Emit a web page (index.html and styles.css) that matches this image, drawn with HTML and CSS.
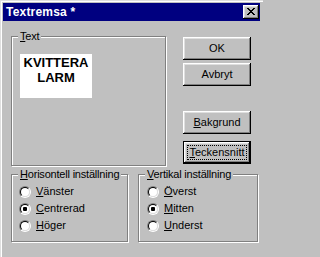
FILE: index.html
```html
<!DOCTYPE html>
<html lang="sv">
<head>
<meta charset="utf-8">
<title>Textremsa</title>
<link rel="stylesheet" href="styles.css">
</head>
<body>
<div class="window">
  <div class="titlebar">
    <span class="title">Textremsa *</span>
    <span class="close">
      <svg width="8" height="7" viewBox="0 0 8 7" shape-rendering="crispEdges">
        <path d="M0 0h2v1H0zM6 0h2v1H6zM1 1h2v1H1zM5 1h2v1H5zM2 2h4v1H2zM3 3h2v1H3zM2 4h4v1H2zM1 5h2v1H1zM5 5h2v1H5zM0 6h2v1H0zM6 6h2v1H6z" fill="#000"/>
      </svg>
    </span>
  </div>
  <div class="content">
    <div class="top">
      <div class="group text-group">
        <div class="legend"><u>T</u>ext</div>
        <div class="preview">KVITTERA<br>LARM</div>
      </div>
      <div class="buttons">
        <div class="btn">OK</div>
        <div class="btn btn-cancel">Avbryt</div>
        <div class="btn btn-bg"><span><u>B</u>akgrund</span></div>
        <div class="btn btn-default"><span class="focus"><u>T</u>eckensnitt</span></div>
      </div>
    </div>
    <div class="bottom">
      <div class="group h-group">
        <div class="legend"><u>H</u>orisontell inställning</div>
        <div class="options">
          <div class="option"><span class="radio"><i></i></span><span><u>V</u>änster</span></div>
          <div class="option"><span class="radio"><i><b></b></i></span><span><u>C</u>entrerad</span></div>
          <div class="option"><span class="radio"><i></i></span><span><u>H</u>öger</span></div>
        </div>
      </div>
      <div class="group v-group">
        <div class="legend"><u>V</u>ertikal inställning</div>
        <div class="options">
          <div class="option"><span class="radio"><i></i></span><span><u>Ö</u>verst</span></div>
          <div class="option"><span class="radio"><i><b></b></i></span><span><u>M</u>itten</span></div>
          <div class="option"><span class="radio"><i></i></span><span><u>U</u>nderst</span></div>
        </div>
      </div>
    </div>
  </div>
</div>
</body>
</html>
```
FILE: styles.css
```css
html, body {
  margin: 0;
  padding: 0;
  background: #c0c0c0;
}

body {
  font-family: "Liberation Sans", Arial, sans-serif;
  font-size: 11px;
  line-height: 13px;
  color: #000;
}

u {
  text-decoration: underline;
  text-underline-offset: 1px;
}

.window {
  width: 263px;
  height: 257px;
  box-sizing: border-box;
  padding: 3px;
  background: #c0c0c0;
  box-shadow: inset 1px 1px 0 #dfdfdf, inset 2px 2px 0 #fff;
}

.titlebar {
  height: 18px;
  background: #000080;
  display: flex;
  align-items: center;
  justify-content: space-between;
}

.title {
  color: #fff;
  font-weight: bold;
  font-size: 12px;
  line-height: 18px;
  padding-left: 3px;
  letter-spacing: 0.2px;
}

.close {
  width: 16px;
  height: 14px;
  margin-right: 1px;
  box-sizing: border-box;
  background: #c0c0c0;
  box-shadow: inset -1px -1px 0 #000, inset 1px 1px 0 #fff, inset -2px -2px 0 #808080, inset 2px 2px 0 #dfdfdf;
  display: flex;
  align-items: center;
  justify-content: center;
  padding: 0 1px 1px 0;
}

.close svg {
  display: block;
}

.content {
  padding-left: 8px;
}

.top {
  display: flex;
  align-items: flex-start;
  margin-top: 15px;
}

.group {
  box-sizing: border-box;
  border: 1px solid #808080;
  box-shadow: inset 1px 1px 0 #fff, 1px 1px 0 #fff;
}

.legend {
  display: table;
  margin: -7px 0 0 6px;
  padding: 0 2px;
  background: #c0c0c0;
  line-height: 13px;
  white-space: nowrap;
  letter-spacing: -0.2px;
}

.text-group {
  width: 155px;
  height: 130px;
}

.preview {
  width: 72px;
  height: 44px;
  margin: 11px 0 0 8px;
  box-sizing: border-box;
  padding-top: 1px;
  background: #fff;
  font-weight: bold;
  font-size: 13px;
  line-height: 15px;
  text-align: center;
}

.buttons {
  width: 68px;
  margin: 1px 0 0 17px;
  display: flex;
  flex-direction: column;
}

.btn {
  height: 23px;
  box-sizing: border-box;
  background: #c0c0c0;
  box-shadow: inset -1px -1px 0 #000, inset 1px 1px 0 #fff, inset -2px -2px 0 #808080, inset 2px 2px 0 #dfdfdf;
  display: flex;
  align-items: center;
  justify-content: center;
  font-size: 11px;
}

.btn-cancel {
  margin-top: 3px;
}

.btn-bg {
  margin-top: 25px;
}

.btn-default {
  margin-top: 7px;
  box-shadow: inset 0 0 0 1px #000, inset -2px -2px 0 #000, inset 2px 2px 0 #fff, inset -3px -3px 0 #808080, inset 3px 3px 0 #dfdfdf;
}

.focus {
  outline: 1px dotted #000;
  outline-offset: 0;
  padding: 0 1px;
  line-height: 13px;
}

.bottom {
  display: flex;
  margin-top: 8px;
}

.h-group {
  width: 117px;
  height: 68px;
}

.v-group {
  width: 120px;
  height: 68px;
  margin-left: 10px;
}

.options {
  margin-top: 2px;
  padding-left: 7px;
}

.v-group .options {
  padding-left: 8px;
}

.option {
  height: 17px;
  display: flex;
  align-items: center;
  gap: 5px;
  font-size: 11px;
}

.radio {
  width: 12px;
  height: 12px;
  box-sizing: border-box;
  border-radius: 50%;
  border: 1px solid;
  border-color: #808080 #fff #fff #808080;
  display: flex;
}

.radio i {
  width: 10px;
  height: 10px;
  box-sizing: border-box;
  border-radius: 50%;
  border: 1px solid;
  border-color: #000 #dfdfdf #dfdfdf #000;
  background: #fff;
  display: flex;
  align-items: center;
  justify-content: center;
}

.radio b {
  width: 4px;
  height: 4px;
  border-radius: 1px;
  background: #000;
}
```
